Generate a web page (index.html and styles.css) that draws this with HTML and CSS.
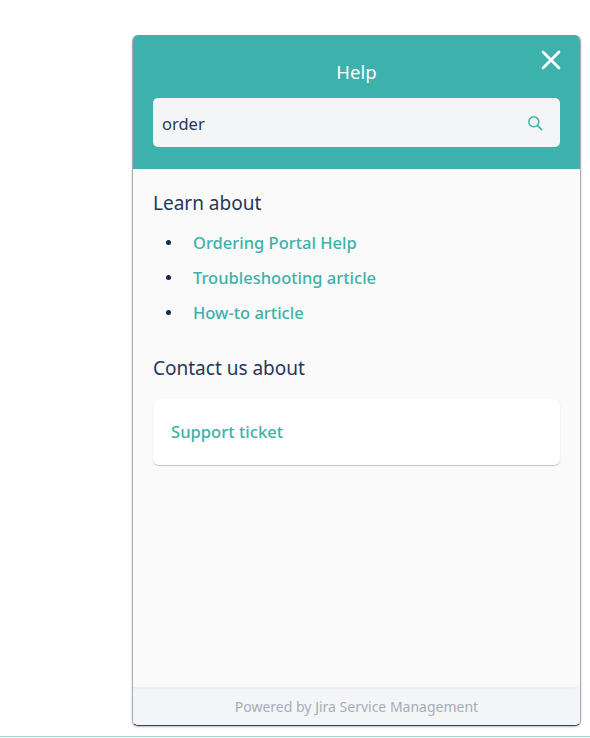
FILE: index.html
```html
<!DOCTYPE html>
<html lang="en">
<head>
<meta charset="utf-8">
<title>Help</title>
<link rel="stylesheet" href="styles.css">
</head>
<body>
<div class="page">
  <section class="widget">
    <header class="head">
      <div class="title-row">
        <h1 class="title">Help</h1>
        <button class="close" aria-label="Close">
          <svg viewBox="0 0 20 20" width="20" height="20"><path d="M2 2 L18 18 M18 2 L2 18" stroke="#fff" stroke-width="2.8" stroke-linecap="round" fill="none"/></svg>
        </button>
      </div>
      <div class="search">
        <span class="query">order</span>
        <svg class="search-icon" viewBox="0 0 16 16" width="16" height="16"><circle cx="6.8" cy="6.8" r="5" fill="none" stroke="#3db1ab" stroke-width="1.5"/><path d="M10.6 10.6 L14.6 14.6" stroke="#3db1ab" stroke-width="1.5" stroke-linecap="round"/></svg>
      </div>
    </header>
    <main class="body">
      <h2 class="heading">Learn about</h2>
      <ul class="links">
        <li><a href="#">Ordering Portal Help</a></li>
        <li><a href="#">Troubleshooting article</a></li>
        <li><a href="#">How-to article</a></li>
      </ul>
      <h2 class="heading contact">Contact us about</h2>
      <a class="card" href="#">Support ticket</a>
    </main>
    <footer class="foot"><span class="foot-text">Powered by Jira Service Management</span></footer>
  </section>
</div>
<div class="rule"></div>
</body>
</html>
```
FILE: styles.css
```css
html, body { margin: 0; padding: 0; background: #fff; }
body { height: 738px; overflow: hidden; font-family: "Noto Sans", "Open Sans", sans-serif; color: #172b4d; }
.page { padding: 35px 0 0 132px; height: 701px; }
.widget { width: 449px; height: 691px; box-sizing: border-box; border-radius: 6px; background: #fafafb; display: flex; flex-direction: column; overflow: hidden; border: 1px solid #a9aebb; border-top: 0; border-bottom: 1px solid #344563; box-shadow: 0 1px 2px rgba(9,30,66,.3); }
.head { background: #3db1ab; height: 134px; margin: 0 -1px; padding: 0 21px; box-sizing: border-box; flex: none; display: flex; flex-direction: column; }
.title-row { height: 63px; display: flex; align-items: center; justify-content: center; position: relative; }
.title { margin: 10px 0 0; font-size: 18.5px; font-weight: 400; color: #fff; line-height: 24px; }
.close { position: absolute; right: -1px; top: 15px; width: 20px; height: 20px; padding: 0; border: 0; background: none; }
.close svg { display: block; }
.search { height: 49px; background: #f4f5f7; border-radius: 5px; display: flex; align-items: center; justify-content: space-between; padding: 0 17px 0 9px; }
.query { font-size: 16.5px; color: #253858; padding-top: 2px; }
.search-icon { display: block; }
.body { flex: 1; padding: 21px 20px 0; }
.heading { margin: 0; font-size: 19px; font-weight: 400; line-height: 26px; color: #253858; }
.links { margin: 13px 0 0; padding: 0; list-style: none; }
.links li { height: 35px; line-height: 27px; font-size: 16.5px; display: flex; align-items: flex-start; }
.links li::before { content: ""; width: 5px; height: 5px; border-radius: 50%; background: #172b4d; margin: 11px 22px 0 13px; flex: none; }
.links a, .card { color: #3db1ab; font-weight: 500; text-decoration: none; }
.contact { margin-top: 21px; }
.card { display: flex; align-items: center; height: 66px; margin-top: 18px; padding: 0 18px 2px; box-sizing: border-box; background: #fff; border-radius: 6px; font-size: 16.6px; box-shadow: 0 1px 1px rgba(9,30,66,.25); }
.foot { flex: none; height: 38px; background: #f4f5f7; box-sizing: border-box; text-align: center; font-size: 14px; color: #a5adba; display: flex; flex-direction: column; }
.foot::before { content: ""; height: 2px; margin-right: 5px; background: #eceef0; }
.foot-text { line-height: 35px; }
.rule { height: 1px; background: #9fd8d3; }
```
